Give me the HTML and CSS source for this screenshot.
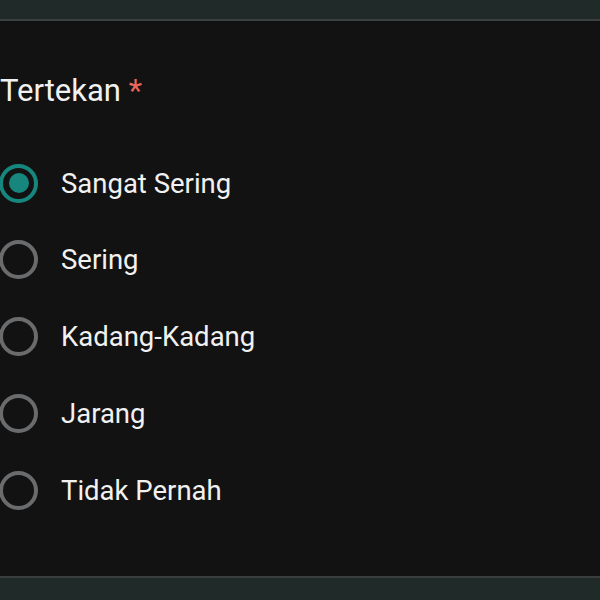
FILE: index.html
```html
<!DOCTYPE html>
<html>
<head>
<meta charset="utf-8">
<link rel="stylesheet" href="styles.css">
</head>
<body>
<div class="page">
  <div class="topbar"></div>
  <main class="card">
    <div class="question">Tertekan <span class="req">*</span></div>
    <div class="options">
      <div class="option"><span class="radio checked"></span><span class="label">Sangat Sering</span></div>
      <div class="option"><span class="radio"></span><span class="label">Sering</span></div>
      <div class="option"><span class="radio"></span><span class="label">Kadang-Kadang</span></div>
      <div class="option"><span class="radio"></span><span class="label">Jarang</span></div>
      <div class="option"><span class="radio"></span><span class="label">Tidak Pernah</span></div>
    </div>
  </main>
  <div class="bottombar"></div>
</div>
</body>
</html>
```
FILE: styles.css
```css
html, body {
  margin: 0;
  padding: 0;
  background: #121212;
}
.page {
  width: 600px;
  height: 600px;
  display: flex;
  flex-direction: column;
  overflow: hidden;
  font-family: Roboto, "Noto Sans", sans-serif;
  color: #e8eaed;
}
.topbar {
  height: 19px;
  background: #202a28;
  border-bottom: 2px solid #3a403e;
  flex: none;
}
.card {
  flex: 1;
  background: #121212;
  padding-top: 51px;
}
.question {
  font-size: 31px;
  line-height: 38px;
  color: #f1f1f1;
}
.req {
  color: #e8675d;
}
.options {
  margin-top: 54px;
  display: flex;
  flex-direction: column;
  gap: 38.75px;
}
.option {
  display: flex;
  align-items: center;
  height: 38px;
  margin-left: -1px;
}
.radio {
  box-sizing: border-box;
  width: 39px;
  height: 39px;
  border-radius: 50%;
  border: 4px solid #6a6b6d;
  flex: none;
  position: relative;
}
.radio.checked {
  border-color: #17877e;
}
.radio.checked::after {
  content: "";
  position: absolute;
  left: 50%;
  top: 50%;
  width: 20px;
  height: 20px;
  margin: -10px 0 0 -10px;
  border-radius: 50%;
  background: #17877e;
}
.label {
  margin-left: 23px;
  font-size: 27.5px;
  color: #f1f1f1;
}
.bottombar {
  height: 22px;
  background: #202a28;
  border-top: 2px solid #393e3c;
  flex: none;
}
```
